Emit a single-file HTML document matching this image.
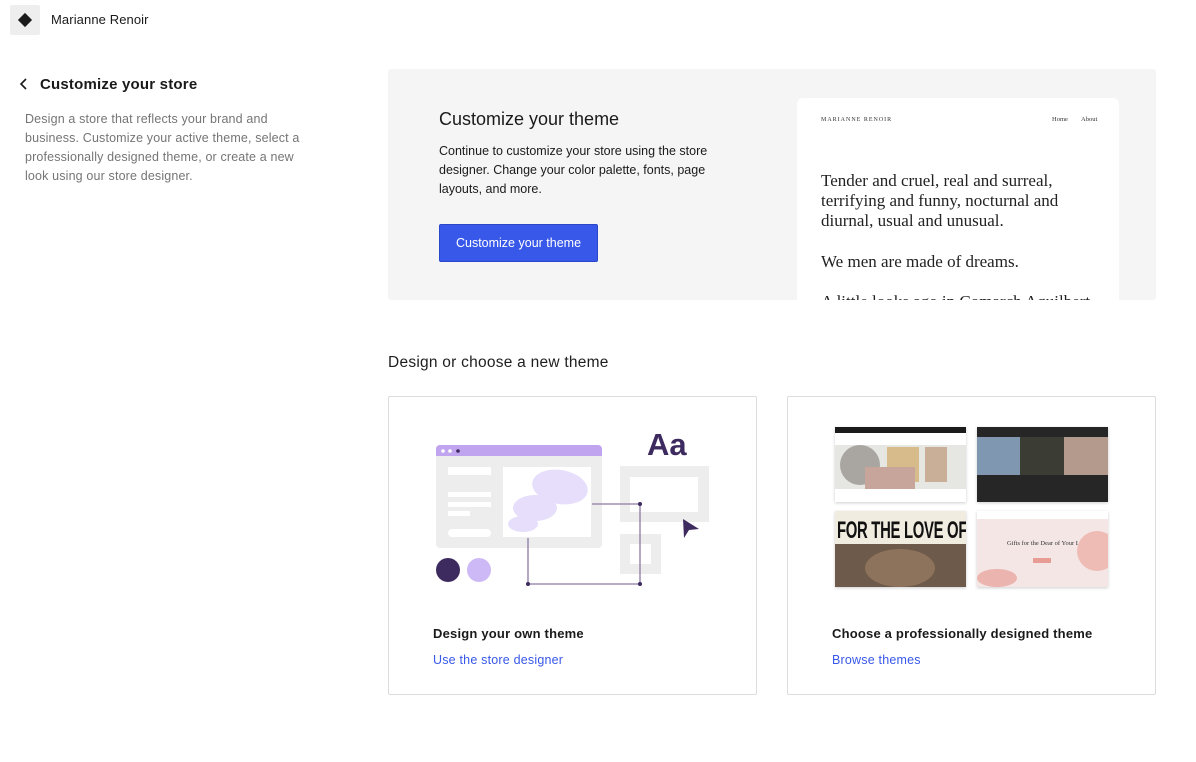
<!DOCTYPE html>
<html><head><meta charset="utf-8"><style>
*{box-sizing:border-box;margin:0;padding:0}
body{width:1196px;height:762px;background:#fff;font-family:"Liberation Sans",sans-serif;color:#1a1a1a;position:relative;overflow:hidden}
.a{position:absolute}
.serif{font-family:"Liberation Serif",serif}
</style></head><body>
<div class="a" style="left:10px;top:5px;width:30px;height:30px;background:#eeeeee;border-radius:2px"></div>
<div class="a" style="left:20px;top:15px;width:10px;height:10px;background:#1a1a1a;transform:rotate(45deg)"></div>
<div class="a" style="left:51px;top:12px;font-size:13px;letter-spacing:0.1px">Marianne Renoir</div>

<svg class="a" style="left:19px;top:77px" width="10" height="14"><path d="M7 2 L2 7 L7 12" fill="none" stroke="#1a1a1a" stroke-width="1.6"/></svg>
<div class="a" style="left:40px;top:76px;font-size:15px;font-weight:bold;letter-spacing:0.2px">Customize your store</div>
<div class="a" style="left:25px;top:110px;width:282px;font-size:12.5px;line-height:19px;color:#757575;letter-spacing:0.15px">Design a store that reflects your brand and business. Customize your active theme, select a professionally designed theme, or create a new look using our store designer.</div>

<div class="a" style="left:388px;top:69px;width:768px;height:231px;background:#f4f5f4;border-radius:3px;overflow:hidden">
 <div class="a" style="left:51px;top:40px;font-size:18px">Customize your theme</div>
 <div class="a" style="left:51px;top:73px;width:290px;font-size:12.5px;line-height:19px;color:#1a1a1a">Continue to customize your store using the store designer. Change your color palette, fonts, page layouts, and more.</div>
 <div class="a" style="left:51px;top:155px;width:159px;height:38px;background:#3858e9;border:1px solid #2a47c8;border-radius:2px;color:#fff;font-size:12.5px;line-height:36px;text-align:center">Customize your theme</div>
 <div class="a" style="left:409px;top:29px;width:322px;height:220px;background:#fff;border-radius:6px">
  <div class="a serif" style="left:24px;top:19px;font-size:6px;letter-spacing:1px;color:#333">MARIANNE RENOIR</div>
  <div class="a serif" style="left:255px;top:18px;font-size:6.5px;color:#333">Home</div>
  <div class="a serif" style="left:284px;top:18px;font-size:6.5px;color:#333">About</div>
  <div class="a serif" style="left:24px;top:73px;width:255px;font-size:17px;line-height:20px;color:#222">Tender and cruel, real and surreal, terrifying and funny, nocturnal and diurnal, usual and unusual.</div>
  <div class="a serif" style="left:24px;top:154px;font-size:17px;color:#222">We men are made of dreams.</div>
  <div class="a serif" style="left:24px;top:194px;font-size:17px;color:#222;white-space:nowrap">A little looks ago in Comarch Aquilbert</div>
 </div>
</div>

<div class="a" style="left:388px;top:354px;font-size:15.5px;letter-spacing:0.25px;color:#1e1e1e">Design or choose a new theme</div>

<div class="a" style="left:388px;top:396px;width:369px;height:299px;border:1px solid #dcdcdc;border-radius:2px"></div>
<svg class="a" style="left:388px;top:396px" width="369" height="230">
 <g transform="translate(-388,-396)">
 <rect x="436" y="445" width="166" height="103" rx="4" fill="#ededed"/>
 <path d="M440 445 H598 a4 4 0 0 1 4 4 V456 H436 V449 a4 4 0 0 1 4 -4z" fill="#c0a4ef"/>
 <circle cx="443" cy="451" r="1.8" fill="#fff"/><circle cx="450" cy="451" r="1.8" fill="#fff"/><circle cx="458" cy="451" r="1.8" fill="#3d2a5f"/>
 <rect x="448" y="467" width="43" height="8" fill="#fff"/>
 <rect x="448" y="492" width="43" height="5" fill="#fff"/>
 <rect x="448" y="502" width="43" height="5" fill="#fff"/>
 <rect x="448" y="511" width="22" height="5" fill="#fff"/>
 <rect x="448" y="529" width="43" height="8" rx="4" fill="#fff"/>
 <rect x="503" y="467" width="88" height="70" fill="#fff"/>
 <ellipse cx="560" cy="487" rx="28" ry="17" transform="rotate(10 560 487)" fill="#e6defb"/>
 <ellipse cx="535" cy="508" rx="22" ry="13" fill="#e6defb"/>
 <ellipse cx="523" cy="524" rx="15" ry="8" fill="#e6defb"/>
 <rect x="620" y="466" width="89" height="56" fill="#ededed"/>
 <rect x="630" y="477" width="68" height="35" fill="#fff"/>
 <rect x="620" y="534" width="41" height="40" fill="#ededed"/>
 <rect x="630" y="544" width="21" height="20" fill="#fff"/>
 <path d="M592 504 H640 V584 H528 V538" fill="none" stroke="#8b7ba3" stroke-width="1.3"/>
 <circle cx="640" cy="504" r="2" fill="#3d2a5f"/><circle cx="640" cy="584" r="2" fill="#3d2a5f"/><circle cx="528" cy="584" r="2" fill="#3d2a5f"/>
 <path d="M683 519 L699 529 L689 530 L684 538 Z" fill="#3d2a5f"/>
 <text x="647" y="455" font-family="Liberation Sans,sans-serif" font-weight="bold" font-size="31" fill="#3d2a5f">Aa</text>
 <circle cx="448" cy="570" r="12" fill="#3d2a5f"/><circle cx="479" cy="570" r="12" fill="#cdb9f5"/>
 </g>
</svg>
<div class="a" style="left:433px;top:626px;font-size:13px;font-weight:bold;letter-spacing:0.2px;color:#1a1a1a">Design your own theme</div>
<div class="a" style="left:433px;top:653px;font-size:12.5px;letter-spacing:0.2px;color:#3858e9">Use the store designer</div>

<div class="a" style="left:787px;top:396px;width:369px;height:299px;border:1px solid #dcdcdc;border-radius:2px"></div>
<div class="a" style="left:835px;top:427px;width:131px;height:75px;background:#e6e6e3;box-shadow:0 1px 3px rgba(0,0,0,.2);overflow:hidden">
 <div class="a" style="left:0;top:0;width:131px;height:6px;background:#1b1b1b"></div>
 <div class="a" style="left:0;top:6px;width:131px;height:12px;background:#fff"></div>
 <div class="a" style="left:5px;top:18px;width:40px;height:40px;border-radius:50%;background:#a9a6a2"></div>
 <div class="a" style="left:52px;top:20px;width:32px;height:35px;background:#d8bb8a"></div>
 <div class="a" style="left:90px;top:20px;width:22px;height:35px;background:#c9ae98"></div>
 <div class="a" style="left:30px;top:40px;width:50px;height:30px;background:#c8a59a"></div>
 <div class="a" style="left:0;top:62px;width:131px;height:13px;background:#fff"></div>
</div>
<div class="a" style="left:977px;top:427px;width:131px;height:75px;background:#262626;box-shadow:0 1px 3px rgba(0,0,0,.2);overflow:hidden">
 <div class="a" style="left:0;top:10px;width:131px;height:38px;background:#7f97b0"></div>
 <div class="a" style="left:43px;top:10px;width:44px;height:38px;background:#3b3d34"></div>
 <div class="a" style="left:87px;top:10px;width:44px;height:38px;background:#b39a8c"></div>
</div>
<div class="a" style="left:835px;top:511px;width:131px;height:76px;background:#f1ece0;box-shadow:0 1px 3px rgba(0,0,0,.2);overflow:hidden">
 <div class="a" style="left:2px;top:6px;font-family:'Liberation Sans',sans-serif;font-weight:bold;font-size:24px;letter-spacing:-0.5px;transform:scaleX(0.62);transform-origin:left;white-space:nowrap;color:#111">FOR THE LOVE OF B</div>
 <div class="a" style="left:0;top:33px;width:131px;height:43px;background:#6d5a4a"></div>
 <div class="a" style="left:30px;top:38px;width:70px;height:38px;border-radius:50%;background:#8e735c"></div>
</div>
<div class="a" style="left:977px;top:511px;width:131px;height:76px;background:#f5e6e6;box-shadow:0 1px 3px rgba(0,0,0,.2);overflow:hidden">
 <div class="a" style="left:0;top:0;width:131px;height:8px;background:#fff"></div>
 <div class="a serif" style="left:30px;top:29px;font-size:6.5px;color:#333">Gifts for the Dear of Your Life</div>
 <div class="a" style="left:56px;top:47px;width:18px;height:5px;background:#e99c94"></div>
 <div class="a" style="left:0;top:58px;width:40px;height:18px;background:#ecb4ae;border-radius:50%"></div>
 <div class="a" style="left:100px;top:20px;width:40px;height:40px;background:#efbcb5;border-radius:50%"></div>
</div>
<div class="a" style="left:832px;top:626px;font-size:13px;font-weight:bold;letter-spacing:0.2px;color:#1a1a1a">Choose a professionally designed theme</div>
<div class="a" style="left:832px;top:653px;font-size:12.5px;letter-spacing:0.2px;color:#3858e9">Browse themes</div>
</body></html>
